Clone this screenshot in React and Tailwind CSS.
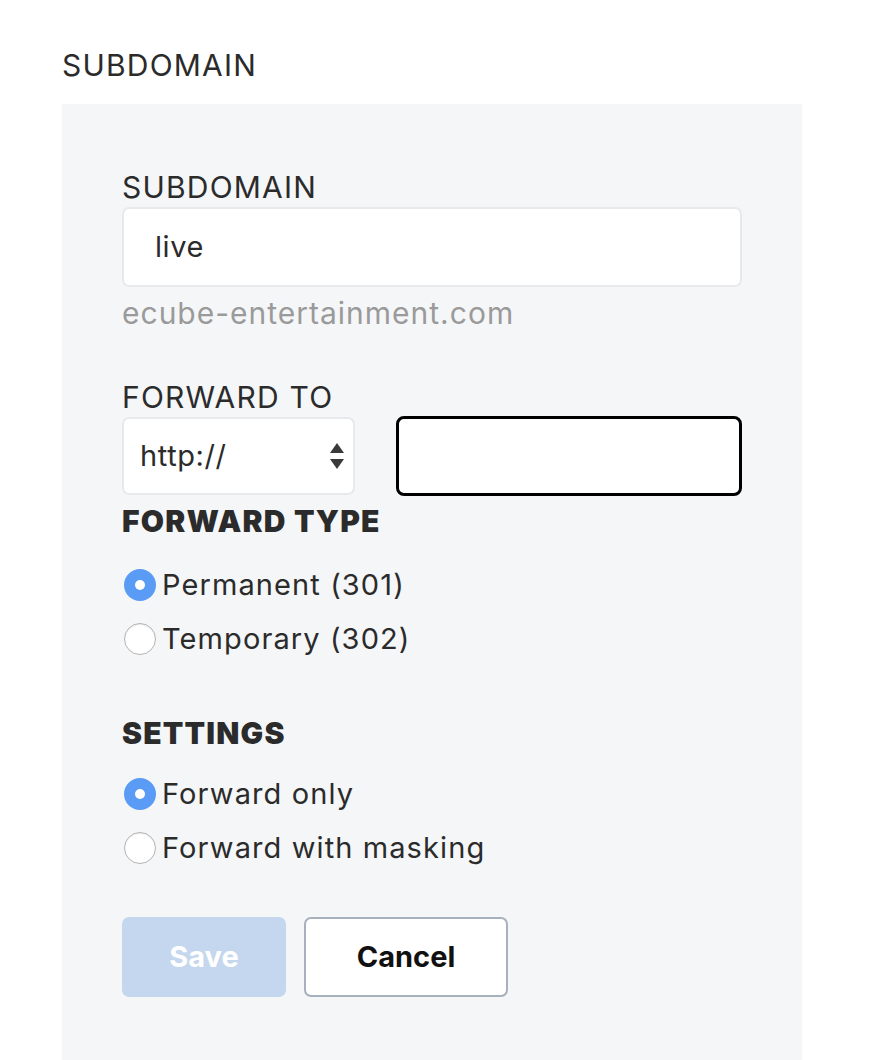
import React from "react";

function Radio({ checked, label }) {
  return (
    <label className="flex items-center h-[54px]">
      {checked ? (
        <span className="ml-[2px] w-[32px] h-[32px] rounded-full bg-[#5a9cf5] flex items-center justify-center shrink-0">
          <span className="w-[10px] h-[10px] rounded-full bg-white" />
        </span>
      ) : (
        <span className="ml-[2px] w-[32px] h-[32px] rounded-full bg-white border border-[#b4b4b4] shrink-0 shadow-[inset_0_1px_1px_rgba(0,0,0,0.08)]" />
      )}
      <span className="ml-[6px] text-[29px] leading-[34px] text-[#2b2b2b] tracking-[1.1px]">{label}</span>
    </label>
  );
}

export default function App() {
  return (
    <div className="min-h-[1060px] bg-white pl-[62px] pt-[40px]" style={{ fontFamily: "Inter, 'Noto Sans', sans-serif" }}>
      <h2 className="text-[30px] leading-[50px] text-[#2b2b2b] tracking-[1.2px]">SUBDOMAIN</h2>
      <div className="mt-[14px] w-[740px] min-h-[956px] bg-[#f5f6f8] pl-[60px] pr-[60px] pt-[66px]">
        <div className="text-[30px] leading-[34px] text-[#2b2b2b] tracking-[1.2px]">SUBDOMAIN</div>
        <div className="mt-[3px] h-[80px] w-[620px] bg-white border-2 border-[#e8e9eb] rounded-[7px] flex items-center pl-[31px] text-[29px] text-[#2b2b2b] tracking-[0.6px]">
          live
        </div>
        <div className="mt-[6px] text-[30px] leading-[40px] text-[#9a9a9a] tracking-[1px]">ecube-entertainment.com</div>
        <div className="mt-[47px] text-[30px] leading-[34px] text-[#2b2b2b] tracking-[1.2px]">FORWARD TO</div>
        <div className="mt-[2px] flex items-center gap-[41px]">
          <div className="w-[233px] h-[78px] bg-white border-2 border-[#e8e9eb] rounded-[7px] flex items-center justify-between pl-[16px] pr-[8px] text-[29px] text-[#2b2b2b] tracking-[0.6px]">
            <span>http://</span>
            <svg width="16" height="30" viewBox="0 0 16 30" className="shrink-0">
              <path d="M8 2 L15 12 L1 12 Z" fill="#3a3a3a" />
              <path d="M1 18 L15 18 L8 28 Z" fill="#3a3a3a" />
            </svg>
          </div>
          <div className="w-[346px] h-[80px] bg-white border-[3px] border-black rounded-[8px]" />
        </div>
        <div className="mt-[8px] text-[30px] leading-[34px] font-black text-[#2b2b2b] tracking-[1.2px]">FORWARD TYPE</div>
        <div className="mt-[20px] flex flex-col">
          <Radio checked label="Permanent (301)" />
          <Radio label="Temporary (302)" />
        </div>
        <div className="mt-[50px] text-[30px] leading-[34px] font-black text-[#2b2b2b] tracking-[1.2px]">SETTINGS</div>
        <div className="mt-[17px] flex flex-col">
          <Radio checked label="Forward only" />
          <Radio label="Forward with masking" />
        </div>
        <div className="mt-[42px] flex gap-[18px]">
          <button className="w-[164px] h-[80px] rounded-[7px] bg-[#c5d7ee] text-white text-[29px] font-bold">Save</button>
          <button className="w-[204px] h-[80px] rounded-[7px] bg-white border-2 border-[#a7b0bd] text-[#111] text-[29px] font-bold">Cancel</button>
        </div>
      </div>
    </div>
  );
}
